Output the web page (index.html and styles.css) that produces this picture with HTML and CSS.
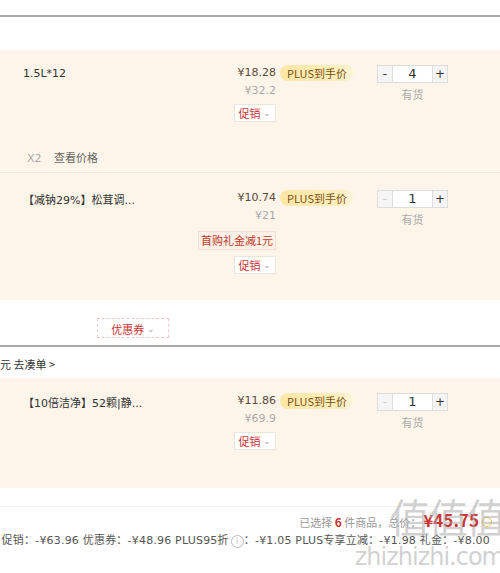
FILE: index.html
```html
<!DOCTYPE html>
<html lang="zh-CN">
<head>
    <meta charset="UTF-8">
    <title>购物车</title>
    <link rel="stylesheet" href="styles.css">
</head>
<body>
    <div class="top-space"></div>
    <div class="shop-head"></div>

    <!-- 第一组商品 -->
    <div class="group">
        <div class="item">
            <div class="item-name">1.5L*12</div>
            <div class="item-price">
                <div class="price">¥18.28</div>
                <div class="old-price">¥32.2</div>
                <span class="promo">促销 <span class="arrow">⌄</span></span>
            </div>
            <div class="item-plus"><span class="plus-tag">PLUS到手价</span></div>
            <div class="item-qty">
                <div class="stepper">
                    <span class="step">-</span>
                    <span class="qty">4</span>
                    <span class="step">+</span>
                </div>
                <div class="stock">有货</div>
            </div>
        </div>
        <div class="gift">
            <span class="gift-num">X2</span>
            <span class="gift-link">查看价格</span>
        </div>

        <div class="item item-second">
            <div class="item-name">【减钠29%】松茸调...</div>
            <div class="item-price">
                <div class="price">¥10.74</div>
                <div class="old-price">¥21</div>
                <span class="coupon-tag">首购礼金减1元</span>
                <span class="promo promo-after">促销 <span class="arrow">⌄</span></span>
            </div>
            <div class="item-plus"><span class="plus-tag">PLUS到手价</span></div>
            <div class="item-qty">
                <div class="stepper">
                    <span class="step step-off">-</span>
                    <span class="qty">1</span>
                    <span class="step">+</span>
                </div>
                <div class="stock">有货</div>
            </div>
        </div>
    </div>

    <div class="shop-foot">
        <span class="coupon-btn">优惠券 <span class="arrow">⌄</span></span>
    </div>

    <div class="shop-head shop-head-text">元 去凑单 &gt;</div>

    <!-- 第二组商品 -->
    <div class="group group-last">
        <div class="item">
            <div class="item-name">【10倍洁净】52颗|静...</div>
            <div class="item-price">
                <div class="price">¥11.86</div>
                <div class="old-price">¥69.9</div>
                <span class="promo">促销 <span class="arrow">⌄</span></span>
            </div>
            <div class="item-plus"><span class="plus-tag">PLUS到手价</span></div>
            <div class="item-qty">
                <div class="stepper">
                    <span class="step step-off">-</span>
                    <span class="qty">1</span>
                    <span class="step">+</span>
                </div>
                <div class="stock">有货</div>
            </div>
        </div>
    </div>

    <div class="summary">
        <div class="summary-line">
            已选择 <b class="count">6</b> 件商品，总价：<b class="total">¥45.75</b><span class="help"></span>
        </div>
        <div class="summary-detail">促销：-¥63.96 优惠券：-¥48.96 PLUS95折<span class="info">i</span>：-¥1.05 PLUS专享立减：-¥1.98 礼金：-¥8.00</div>
    </div>

    <!-- 水印 -->
    <div class="watermark">
        <div class="wm-big">值值值</div>
        <div class="wm-small">zhizhizhi.com</div>
    </div>
</body>
</html>
```

FILE: styles.css
```css
body {
    margin: 0;
    width: 500px;
    height: 573px;
    overflow: hidden;
    position: relative;
    background: #fff;
    color: #333;
    font-family: "DejaVu Sans", "Noto Sans CJK SC", sans-serif;
    font-size: 11px;
}
.top-space {
    height: 15px;
}
.shop-head {
    height: 33px;
    border-top: 2px solid #aaa;
}
.shop-head-text {
    height: 31px;
    line-height: 34px;
    color: #333;
    font-family: "Noto Sans CJK SC", sans-serif;
}
.group {
    background: #fdf5e9;
    height: 250px;
}
.group-last {
    height: 110px;
}
.item {
    display: flex;
    padding: 15px 0 0 23px;
}
.item-second {
    border-top: 1px solid #f2e6d6;
    padding-top: 17px;
}
.item-name {
    width: 176px;
    line-height: 16px;
    padding-top: 1px;
}
.item-second .item-name, .group-last .item-name {
    padding-top: 3px;
}
.item-price {
    width: 77px;
    display: flex;
    flex-direction: column;
    align-items: flex-end;
}
.price {
    line-height: 16px;
    color: #5a4a3a;
}
.old-price {
    line-height: 20px;
    color: #aaa;
}
.promo {
    margin-top: 3px;
    padding: 0 4px;
    height: 16px;
    line-height: 16px;
    background: #fff;
    border: 1px solid #ece6de;
    color: #c33;
    font-family: "Noto Sans CJK SC", sans-serif;
}
.promo-after {
    margin-top: 6px;
}
.arrow {
    color: #aaa;
    font-size: 9px;
    position: relative;
    top: -2px;
}
.coupon-tag {
    margin-top: 5px;
    height: 17px;
    line-height: 17px;
    padding: 0 2px;
    white-space: nowrap;
    background: #fdf1e8;
    border: 1px solid #f2ddd0;
    color: #c0392b;
    font-family: "Noto Sans CJK SC", sans-serif;
}
.item-plus {
    width: 101px;
}
.plus-tag {
    display: inline-block;
    margin-left: 4px;
    height: 16px;
    line-height: 16px;
    padding: 0 7px;
    border-radius: 8px;
    background: linear-gradient(90deg, #fde6a6, #fdeebd 80%, #fdf5e0);
    color: #7a5212;
    font-family: "Noto Sans CJK SC", sans-serif;
}
.item-qty {
    width: 71px;
    text-align: center;
}
.stepper {
    display: flex;
    height: 18px;
    border: 1px solid #ddd;
    box-sizing: border-box;
    background: #fff;
}
.step {
    width: 14px;
    line-height: 16px;
    background: #f5f5f5;
    color: #333;
    font-size: 12px;
}
.step-off {
    color: #ccc;
}
.qty {
    flex: 1;
    line-height: 16px;
    font-size: 13px;
    border-left: 1px solid #ddd;
    border-right: 1px solid #ddd;
}
.stock {
    margin-top: 3px;
    color: #aaa;
    font-family: "Noto Sans CJK SC", sans-serif;
}
.gift {
    padding: 27px 0 0 27px;
    height: 23px;
    line-height: 16px;
}
.gift-num {
    color: #aaa;
}
.gift-link {
    margin-left: 9px;
    color: #666;
    font-family: "Noto Sans CJK SC", sans-serif;
}
.shop-foot {
    height: 45px;
    padding-left: 97px;
    box-sizing: border-box;
    padding-top: 18px;
}
.coupon-btn {
    display: inline-block;
    width: 72px;
    height: 20px;
    line-height: 20px;
    box-sizing: border-box;
    text-align: center;
    border: 1px dashed #f0c8c8;
    color: #c33;
    font-family: "Noto Sans CJK SC", sans-serif;
}
.summary {
    height: 85px;
}
.summary-line {
    margin-top: 18px;
    border-top: 1px solid #f3f0f0;
    padding-top: 3px;
    padding-right: 8px;
    text-align: right;
    line-height: 20px;
    color: #999;
    font-family: "Noto Sans CJK SC", sans-serif;
}
.count {
    color: #c33;
    font-size: 12px;
}
.total {
    color: #c33;
    font-size: 17px;
    margin-left: 2px;
}
.help {
    display: inline-block;
    width: 8px;
    height: 8px;
    border: 1px solid #f0c040;
    border-radius: 50%;
    margin-left: 3px;
}
.summary-detail {
    text-align: right;
    padding-right: 10px;
    white-space: nowrap;
    line-height: 18px;
    letter-spacing: 0.2px;
    color: #555;
}
.info {
    display: inline-block;
    width: 11px;
    height: 11px;
    line-height: 11px;
    margin-left: 2px;
    border: 1px solid #bbb;
    border-radius: 50%;
    text-align: center;
    font-size: 8px;
    color: #bbb;
}
.watermark {
    position: absolute;
    right: -4px;
    top: 488px;
    text-align: right;
    color: rgba(170, 170, 170, 0.55);
    pointer-events: none;
}
.wm-big {
    font-size: 40px;
    line-height: 56px;
    font-family: "Noto Sans CJK SC", sans-serif;
    letter-spacing: -2px;
}
.wm-small {
    font-size: 24px;
    line-height: 26px;
    font-family: "DejaVu Sans", sans-serif;
    letter-spacing: -1px;
}
```
